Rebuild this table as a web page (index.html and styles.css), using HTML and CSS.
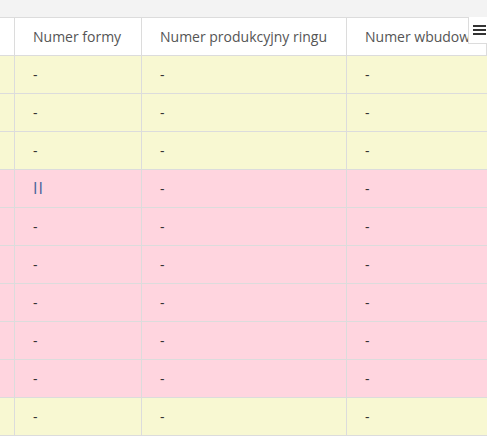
FILE: index.html
```html
<!DOCTYPE html>
<html lang="pl">
<head>
  <meta charset="UTF-8">
  <title>Tabela form</title>
  <link rel="stylesheet" href="styles.css">
</head>
<body>
  <div class="toolbar"></div>

  <div class="grid">
    <div class="head">
      <div class="cell"></div>
      <div class="cell">Numer formy</div>
      <div class="cell">Numer produkcyjny ringu</div>
      <div class="cell">Numer wbudowania</div>
      <button class="menu" type="button">
        <svg width="13" height="10" viewBox="0 0 13 10"><path d="M0 1h13M0 5h13M0 9h13" stroke="#333" stroke-width="2"/></svg>
      </button>
    </div>

    <div class="row yellow"><div class="cell"></div><div class="cell">-</div><div class="cell">-</div><div class="cell">-</div></div>
    <div class="row yellow"><div class="cell"></div><div class="cell">-</div><div class="cell">-</div><div class="cell">-</div></div>
    <div class="row yellow"><div class="cell"></div><div class="cell">-</div><div class="cell">-</div><div class="cell">-</div></div>
    <div class="row pink"><div class="cell"></div><div class="cell link">II</div><div class="cell">-</div><div class="cell">-</div></div>
    <div class="row pink"><div class="cell"></div><div class="cell">-</div><div class="cell">-</div><div class="cell">-</div></div>
    <div class="row pink"><div class="cell"></div><div class="cell">-</div><div class="cell">-</div><div class="cell">-</div></div>
    <div class="row pink"><div class="cell"></div><div class="cell">-</div><div class="cell">-</div><div class="cell">-</div></div>
    <div class="row pink"><div class="cell"></div><div class="cell">-</div><div class="cell">-</div><div class="cell">-</div></div>
    <div class="row pink"><div class="cell"></div><div class="cell">-</div><div class="cell">-</div><div class="cell">-</div></div>
    <div class="row yellow"><div class="cell"></div><div class="cell">-</div><div class="cell">-</div><div class="cell">-</div></div>
  </div>
</body>
</html>
```

FILE: styles.css
```css
body {
  margin: 0;
  background: #fff;
  font-family: 'Open Sans', sans-serif;
  font-size: 14px;
  color: #333;
  overflow: hidden;
}

.toolbar {
  height: 17px;
  background: #f3f3f3;
  border-bottom: 1px solid #dcdcdc;
}

.grid {
  width: 487px;
}

.head,
.row {
  display: grid;
  grid-template-columns: 15px 127px 205px 1fr;
  height: 38px;
}

.head {
  position: relative;
  background: #fff;
  color: #555;
}

.cell {
  box-sizing: border-box;
  display: flex;
  align-items: center;
  padding: 0 18px 0 18px;
  border-right: 1px solid #dcdcdc;
  border-bottom: 1px solid #dcdcdc;
  white-space: nowrap;
  overflow: hidden;
}

.cell:first-child {
  padding: 0;
}

.cell:last-child {
  border-right: none;
}

.yellow {
  background: #f8f8d2;
}

.pink {
  background: #ffd5df;
}

.link {
  color: #45629a;
  font-size: 16px;
  letter-spacing: 1px;
  padding-bottom: 2px;
}

.menu {
  position: absolute;
  top: -1px;
  right: 0;
  width: 19px;
  height: 27px;
  padding: 0 0 0 4px;
  border: none;
  border-left: 1px solid #dcdcdc;
  border-bottom: 1px solid #dcdcdc;
  background: #fff;
  display: flex;
  align-items: center;
}
```
